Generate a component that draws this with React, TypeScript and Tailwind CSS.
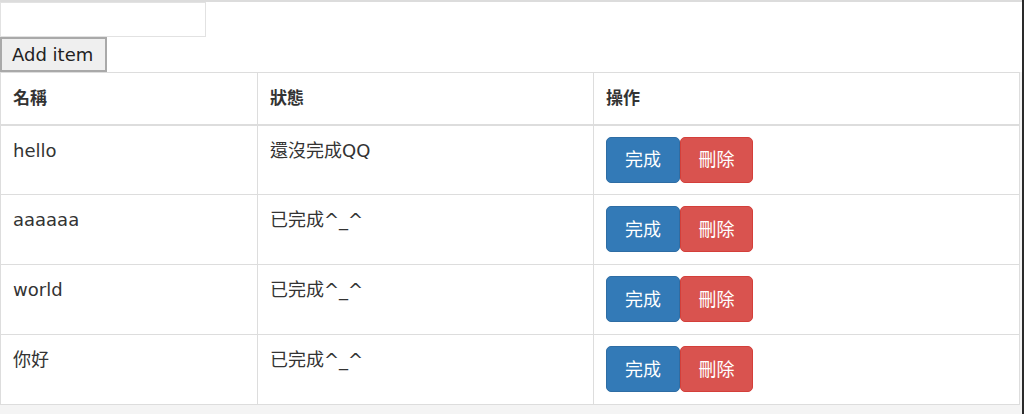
import { useState } from "react";

type Item = { name: string; done: boolean };

const font = { fontFamily: '"DejaVu Sans", "Noto Sans CJK TC", sans-serif' };

export default function App() {
  const [text, setText] = useState("");
  const [items, setItems] = useState<Item[]>([
    { name: "hello", done: false },
    { name: "aaaaaa", done: true },
    { name: "world", done: true },
    { name: "你好", done: true },
  ]);

  const addItem = () => {
    if (!text) return;
    setItems([...items, { name: text, done: false }]);
    setText("");
  };

  return (
    <div className="flex h-[414px] w-[1024px] text-[#333]" style={font}>
      <div className="flex flex-1 flex-col bg-[#f4f4f4]">
        <div className="border-t-2 border-[#dcdcdc] bg-white">
          <input
            value={text}
            onChange={(e) => setText(e.target.value)}
            className="block h-[35px] w-[206px] border border-[#e2e2e2] bg-white px-2 text-base outline-none"
          />
          <button
            onClick={addItem}
            className="block h-[35px] w-[107px] border-2 border-[#a9a9a9] bg-[#efefef] text-left pl-[10px] text-[18px] text-[#222]"
          >
            Add item
          </button>
        </div>
        <table className="w-[1020px] border-collapse bg-white text-left">
          <thead>
            <tr className="h-[52px]">
              <th className="w-[257px] border border-b-2 border-[#ddd] px-3 text-[17px] font-bold">名稱</th>
              <th className="w-[336px] border border-b-2 border-[#ddd] px-3 text-[17px] font-bold">狀態</th>
              <th className="border border-b-2 border-[#ddd] px-3 text-[17px] font-bold">操作</th>
            </tr>
          </thead>
          <tbody>
            {items.map((item, i) => (
              <tr key={i} className="h-[70px] align-top">
                <td className="border border-[#ddd] px-3 pt-[13px] text-[18px] leading-6">{item.name}</td>
                <td className="border border-[#ddd] px-3 pt-[13px] text-[18px] leading-6">
                  {item.done ? "已完成^_^" : "還沒完成QQ"}
                </td>
                <td className="border border-[#ddd] px-3 pt-[11px]">
                  <div className="flex">
                    <button
                      onClick={() => setItems(items.map((it, j) => (j === i ? { ...it, done: true } : it)))}
                      className="h-[46px] w-[74px] rounded-[5px] border border-[#2e6da4] bg-[#337ab7] text-[18px] text-white"
                    >
                      完成
                    </button>
                    <button
                      onClick={() => setItems(items.filter((_, j) => j !== i))}
                      className="h-[46px] w-[73px] rounded-[5px] border border-[#d43f3a] bg-[#d9534f] text-[18px] text-white"
                    >
                      刪除
                    </button>
                  </div>
                </td>
              </tr>
            ))}
          </tbody>
        </table>
      </div>
      <div className="w-[2px] bg-[#2a2a2a]" />
    </div>
  );
}
